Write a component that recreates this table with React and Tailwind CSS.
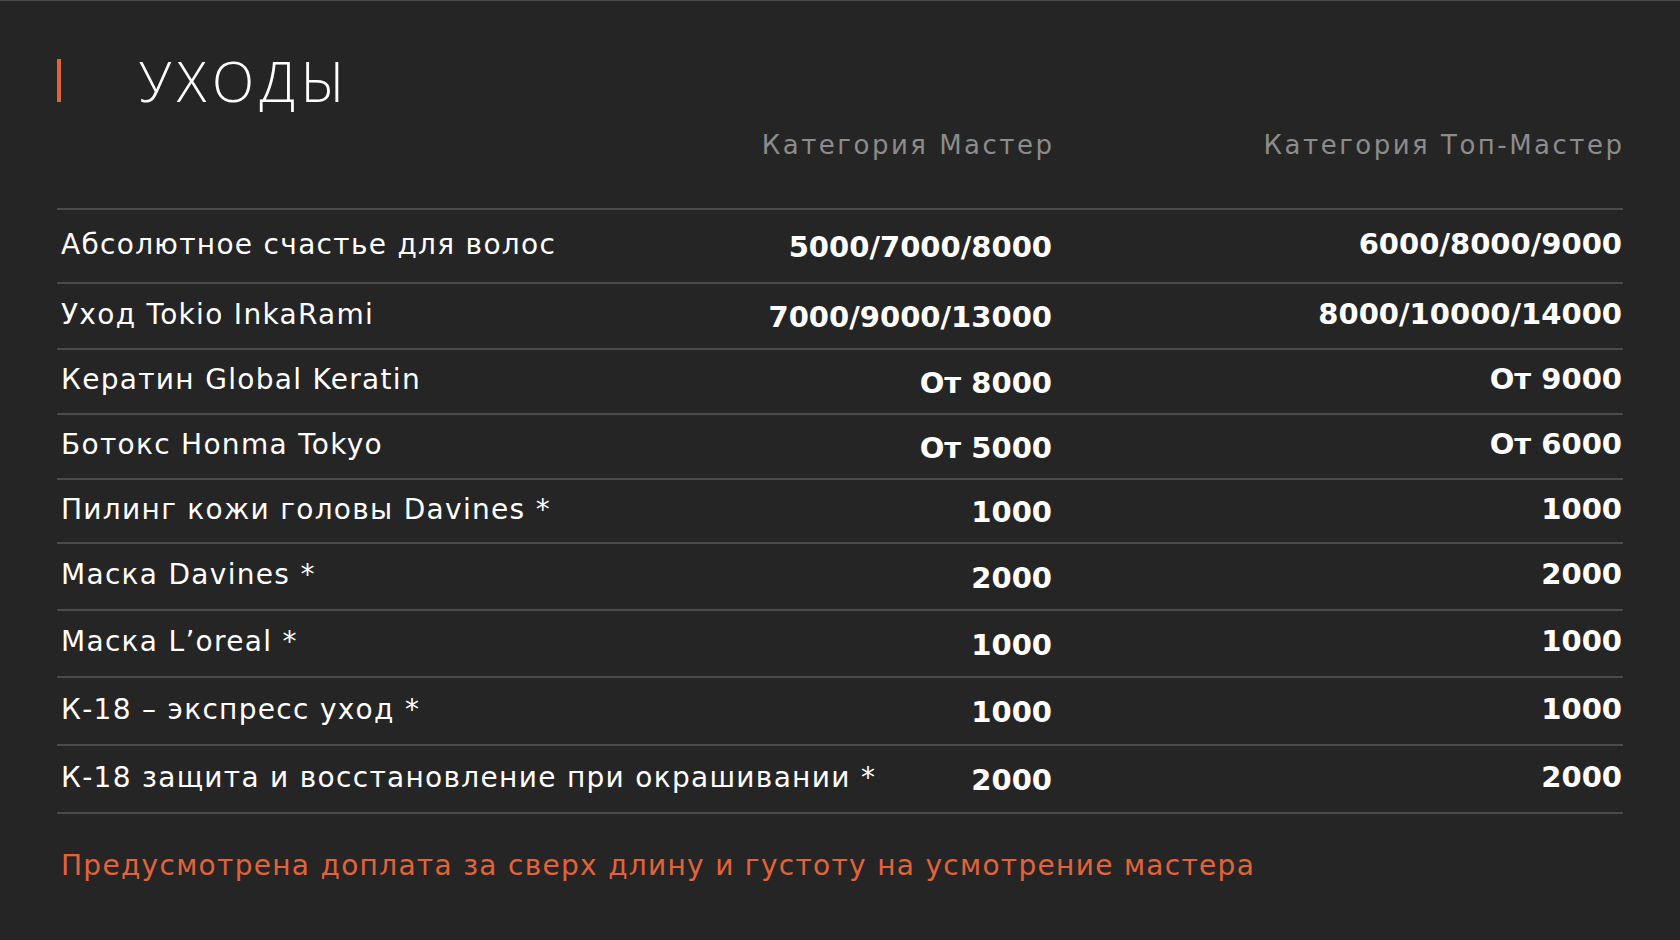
import React from 'react';

const rows = [
  { name: 'Абсолютное счастье для волос', master: '5000/7000/8000', top: '6000/8000/9000', h: 'h-[74px]' },
  { name: 'Уход Tokio InkaRami', master: '7000/9000/13000', top: '8000/10000/14000', h: 'h-[66px]' },
  { name: 'Кератин Global Keratin', master: 'От 8000', top: 'От 9000', h: 'h-[65px]' },
  { name: 'Ботокс Honma Tokyo', master: 'От 5000', top: 'От 6000', h: 'h-[65px]' },
  { name: 'Пилинг кожи головы Davines *', master: '1000', top: '1000', h: 'h-[64px]' },
  { name: 'Маска Davines *', master: '2000', top: '2000', h: 'h-[67px]' },
  { name: 'Маска L’oreal *', master: '1000', top: '1000', h: 'h-[67px]' },
  { name: 'К-18 – экспресс уход *', master: '1000', top: '1000', h: 'h-[68px]' },
  { name: 'К-18 защита и восстановление при окрашивании *', master: '2000', top: '2000', h: 'h-[68px]' },
];

export default function App() {
  return (
    <div className="min-h-screen bg-[#252525] border-t border-[#4b4b4b] px-[57px] pt-[52px] font-['DejaVu_Sans',sans-serif] text-white">
      {/* title */}
      <div className="flex items-center">
        <div className="w-[4px] h-[43px] bg-[#e2633a]" />
        <h1 className="ml-[78px] text-[55px] leading-none font-light font-['Open_Sans',sans-serif] tracking-[5.5px]">УХОДЫ</h1>
      </div>

      {/* column heads */}
      <div className="grid grid-cols-[minmax(0,1fr)_300px_570px] pt-[24px] pb-[50px] border-b-2 border-[#4a4a4a] text-[26px] leading-none tracking-[2.5px] text-[#8c8c8c]">
        <div />
        <div className="text-right pr-[1px] -mr-[2.5px] whitespace-nowrap">Категория Мастер</div>
        <div className="text-right pr-[1px] -mr-[2.5px] whitespace-nowrap">Категория Топ-Мастер</div>
      </div>

      {rows.map((r) => (
        <div
          key={r.name}
          className={`grid grid-cols-[minmax(0,1fr)_300px_570px] items-center border-b-2 border-[#4a4a4a] ${r.h}`}
        >
          <div className="pl-[4px] pb-[3px] text-[28px] leading-none tracking-[1.3px] whitespace-nowrap">{r.name}</div>
          <div className="text-right pr-[1px] pt-[3px] text-[29px] leading-none font-bold whitespace-nowrap">{r.master}</div>
          <div className="text-right pr-[1px] pb-[4px] text-[29px] leading-none font-bold whitespace-nowrap">{r.top}</div>
        </div>
      ))}

      <p className="mt-[38px] pl-[4px] text-[28px] leading-none tracking-[1.3px] text-[#e2633a] whitespace-nowrap">
        Предусмотрена доплата за сверх длину и густоту на усмотрение мастера
      </p>
    </div>
  );
}
